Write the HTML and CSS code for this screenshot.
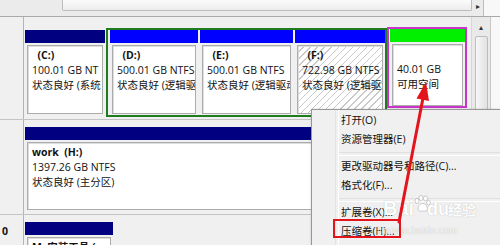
FILE: index.html
```html
<!DOCTYPE html>
<html lang="zh-CN">
<head>
<meta charset="utf-8">
<title>磁盘管理</title>
<link rel="stylesheet" href="styles.css">
</head>
<body>
<div class="screen">
  <div class="hbar">
    <div class="htrack"><div class="hthumb"></div></div>
    <div class="harrow">&#9656;</div>
    <div class="corner"></div>
  </div>
  <div class="pane">
    <div class="disks">
      <div class="row row1">
        <div class="label"></div>
        <div class="parts">
          <div class="part w-c">
            <div class="bar primary"></div>
            <div class="body"><div class="name">&nbsp;&nbsp;(C:)</div><div>100.01 GB NT</div><div>状态良好 (系统</div></div>
          </div>
          <div class="group-ext">
            <div class="part w-d">
              <div class="bar logical"></div>
              <div class="body"><div class="name">&nbsp;&nbsp;(D:)</div><div>500.01 GB NTFS</div><div>状态良好 (逻辑驱动器)</div></div>
            </div>
            <div class="part w-e">
              <div class="bar logical"></div>
              <div class="body"><div class="name">&nbsp;&nbsp;(E:)</div><div>500.01 GB NTFS</div><div>状态良好 (逻辑驱动器)</div></div>
            </div>
            <div class="part w-f">
              <div class="bar logical"></div>
              <div class="body hatched"><div class="name">&nbsp;&nbsp;(F:)</div><div>722.98 GB NTFS</div><div>状态良好 (逻辑驱动器)</div></div>
            </div>
          </div>
          <div class="group-free">
            <div class="part w-free">
              <div class="bar free"></div>
              <div class="body"><div class="name">&nbsp;</div><div>40.01 GB</div><div>可用空间</div></div>
            </div>
          </div>
        </div>
      </div>
      <div class="row row2">
        <div class="label"></div>
        <div class="parts">
          <div class="part w-h">
            <div class="bar primary"></div>
            <div class="body"><div class="name">work&nbsp;&nbsp;(H:)</div><div>1397.26 GB NTFS</div><div>状态良好 (主分区)</div></div>
          </div>
        </div>
      </div>
      <div class="row row3">
        <div class="label"><span class="name">0</span></div>
        <div class="parts">
          <div class="part w-m">
            <div class="bar primary"></div>
            <div class="body"><div class="name">M&nbsp;&nbsp;安装工具 (</div></div>
          </div>
        </div>
      </div>
    </div>
    <div class="vbar">
      <div class="vup">&#9652;</div>
      <div class="vthumb"></div>
    </div>
    <div class="edge"></div>
  </div>

  <div class="menu">
    <div class="item">打开(O)</div>
    <div class="item">资源管理器(E)</div>
    <div class="sep"></div>
    <div class="item">更改驱动器号和路径(C)...</div>
    <div class="item">格式化(F)...</div>
    <div class="sep"></div>
    <div class="item">扩展卷(X)...</div>
    <div class="item">压缩卷(H)...</div>
    <div class="item">添加镜像(A)...</div>
  </div>

  <div class="watermark">
    <span class="wm-bai">Bai</span>
    <svg class="wm-paw" width="18" height="18" viewBox="0 0 18 18">
      <ellipse cx="4" cy="6" rx="2" ry="2.6"/>
      <ellipse cx="8" cy="3" rx="2" ry="2.6"/>
      <ellipse cx="12.5" cy="3.5" rx="2" ry="2.6"/>
      <ellipse cx="15.5" cy="7.5" rx="1.8" ry="2.4"/>
      <path d="M5 14 C5 10 8 8.5 10 8.5 C12.5 8.5 14.5 11 14.5 14 C14.5 16 12.5 16.5 10 16 C7.5 16.5 5 16 5 14 Z"/>
    </svg>
    <span class="wm-du">du</span>
    <span class="wm-jy">经验</span>
    <div class="wm-url">jingyan.baidu.com</div>
  </div>

  <div class="redbox"></div>
  <svg class="arrow" width="500" height="245" viewBox="0 0 500 245">
    <line x1="399" y1="222" x2="423" y2="98" stroke="#e3141c" stroke-width="3" stroke-linecap="round"/>
    <polygon points="426,82 429,101 416.5,98.6" fill="#e3141c"/>
  </svg>
</div>
</body>
</html>
```

FILE: styles.css
```css
* {
  box-sizing: border-box;
  margin: 0;
  padding: 0;
}

html, body {
  width: 500px;
  height: 245px;
  overflow: hidden;
}

body {
  background: #f0f0f0;
  font-family: "Open Sans", "Noto Sans CJK SC", sans-serif;
  font-size: 10.5px;
  line-height: 15px;
  color: #111;
}

.screen {
  position: relative;
  width: 500px;
  height: 245px;
  overflow: hidden;
}

/* top horizontal scrollbar */
.hbar {
  display: flex;
  height: 17px;
  border-bottom: 1px solid #a9a9a9;
  background: #ebebeb;
}

.htrack {
  flex: 1;
  display: flex;
  padding-left: 62px;
}

.hthumb {
  flex: 1;
  height: 11px;
  background: linear-gradient(#fbfbfb, #ececec);
  border: 1px solid #bcbcbc;
  border-top: none;
  border-radius: 0 0 2px 2px;
}

.harrow {
  width: 11px;
  height: 11px;
  font-size: 8px;
  line-height: 11px;
  text-align: center;
  color: #333;
}

.corner {
  width: 17px;
  background: #f8f8f8;
  border-left: 1px solid #bcbcbc;
}

/* graphical pane */
.pane {
  display: flex;
  height: 228px;
}

.disks {
  width: 471px;
  display: flex;
  flex-direction: column;
  overflow: hidden;
}

.row {
  display: flex;
  flex: none;
  border-bottom: 1px solid #c4c4c4;
}

.row1 {
  height: 103px;
}

.row2 {
  height: 95px;
}

.row3 {
  flex: 1 1 0;
  min-height: 0;
  border-bottom: none;
  overflow: hidden;
}

.label {
  width: 24px;
  flex: none;
  border-right: 1px solid #b4b4b4;
  padding: 9px 0 0 2px;
  overflow: hidden;
}

.parts {
  flex: 1;
  display: flex;
  align-items: flex-start;
  padding-left: 1px;
}

.row1 .parts {
  padding-top: 11px;
}

.row2 .parts,
.row3 .parts {
  padding-top: 7px;
}

.part {
  display: flex;
  flex-direction: column;
  flex: none;
  height: 84px;
}

.w-c { width: 80px; margin-top: 2px; }
.w-d { width: 88px; }
.w-e { width: 93px; }
.w-f { width: 90px; }
.w-free { width: 75px; height: 77px; }
.w-h { width: 443px; height: 83px; }
.w-m { width: 88px; height: 40px; }

.bar {
  height: 13px;
  flex: none;
}

.primary { background: #000080; }
.logical { background: #0000ff; }
.free { background: #00f000; }

.body {
  flex: 1;
  margin: 2px 2px 0;
  border: 1px solid #acacac;
  box-shadow: inset 1px 1px 0 #dedede;
  background: #fff;
  padding: 2px 0 0 4px;
  white-space: nowrap;
  overflow: hidden;
}

.hatched {
  background: repeating-linear-gradient(135deg, #ffffff 0 4px, #c9c9c9 4px 5px);
}

.name {
  font-weight: 700;
}

.group-ext {
  display: flex;
  gap: 2px;
  width: 281px;
  height: 89px;
  margin-left: 1px;
  padding: 0 2px;
  border: 2px solid #1f7d1f;
}

.group-free {
  width: 80px;
  height: 81px;
  margin-top: -1px;
  padding: 0 1px;
  border: 2px solid #c934c9;
}

/* vertical scrollbar */
.vbar {
  width: 19px;
  flex: none;
  background: #e9e9e9;
  border-left: 1px solid #d6d6d6;
  display: flex;
  flex-direction: column;
  align-items: center;
  padding-top: 3px;
}

.vup {
  height: 14px;
  font-size: 8px;
  line-height: 14px;
  color: #333;
}

.vthumb {
  width: 13px;
  flex: 1;
  margin-top: 2px;
  background: linear-gradient(90deg, #f7f7f7, #e2e2e2);
  border: 1px solid #bdbdbd;
  border-radius: 2px;
}

.edge {
  flex: 1;
  background: #f8f8f8;
  border-left: 1px solid #c8c8c8;
}

/* context menu */
.menu {
  position: absolute;
  left: 311px;
  top: 109px;
  width: 200px;
  height: 150px;
  background: #f0f0f0;
  border: 1px solid #979797;
  padding-top: 1px;
  box-shadow: 1px 1px 3px rgba(0, 0, 0, 0.3);
}

.menu::before {
  content: "";
  position: absolute;
  left: 23px;
  top: 0;
  bottom: 0;
  width: 2px;
  border-left: 1px solid #e2e3e3;
  border-right: 1px solid #ffffff;
}

.item {
  position: relative;
  height: 19px;
  line-height: 19px;
  padding-left: 29px;
  white-space: nowrap;
}

.sep {
  position: relative;
  height: 8px;
  margin-left: 27px;
}

.sep::after {
  content: "";
  position: absolute;
  left: 0;
  right: 0;
  top: 3px;
  height: 2px;
  border-top: 1px solid #e0e0e0;
  border-bottom: 1px solid #ffffff;
}

/* watermark */
.watermark {
  position: absolute;
  left: 383px;
  top: 195px;
  width: 110px;
  height: 50px;
  color: #ffffff;
  text-shadow: 0 0 1px rgba(90, 90, 90, 0.45);
  font-family: "Liberation Sans", sans-serif;
  font-weight: 700;
}

.wm-bai,
.wm-du {
  position: absolute;
  top: 2px;
  font-size: 20px;
  line-height: 22px;
}

.wm-bai { left: 0; }
.wm-du { left: 44px; top: 3px; font-size: 18px; }

.wm-paw {
  position: absolute;
  left: 30px;
  top: 0;
  fill: #ffffff;
  stroke: rgba(110, 110, 110, 0.4);
  stroke-width: 0.8;
}

.wm-jy {
  position: absolute;
  left: 65px;
  top: 6px;
  font-family: "Noto Sans CJK SC", sans-serif;
  font-size: 14px;
  line-height: 16px;
}

.wm-url {
  position: absolute;
  left: -6px;
  top: 30px;
  font-size: 10px;
  line-height: 12px;
  font-weight: 400;
  color: rgba(255, 255, 255, 0.9);
}

.redbox {
  position: absolute;
  left: 333px;
  top: 219px;
  width: 68px;
  height: 19px;
  border: 2px solid #e3141c;
}

.arrow {
  position: absolute;
  left: 0;
  top: 0;
  pointer-events: none;
}
```
